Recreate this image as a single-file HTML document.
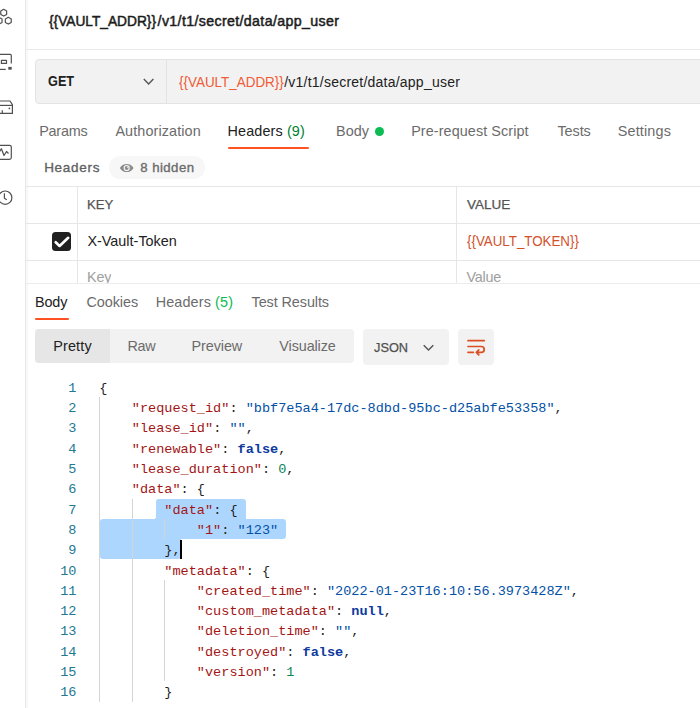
<!DOCTYPE html>
<html><head><meta charset="utf-8">
<style>
*{margin:0;padding:0;box-sizing:border-box}
html,body{width:700px;height:708px;overflow:hidden;background:#fff}
body{position:relative;font-family:"Liberation Sans",sans-serif;color:#212121}
.a{position:absolute;white-space:pre;line-height:1}
.hl{position:absolute;height:1px;background:#e6e6e6}
.vl{position:absolute;width:1px;background:#e6e6e6}
.code{font-family:"Liberation Mono",monospace;font-size:13.553px;color:#1f1f1f}
.ln{position:absolute;font-family:"Liberation Mono",monospace;font-size:13.553px;color:#237893;text-align:right;line-height:1;white-space:pre}
.k{color:#a31515}.s{color:#0451a5}.b{color:#0d3a9e;font-weight:bold}.n{color:#098658}
</style></head><body>
<div style="position:absolute;left:25px;top:0;width:1px;height:708px;background:#e8e8e8"></div>
<div style="position:absolute;left:26px;top:0;width:2px;height:708px;background:#f8f8f8"></div>
<!-- sidebar icons -->
<svg style="position:absolute;left:0;top:0" width="25" height="210" viewBox="0 0 25 210" fill="none" stroke="#505050" stroke-width="1.2" stroke-linejoin="round">
  <path d="M3.70 9.30 L0.76 11.00 L0.76 14.40 L3.70 16.10 L6.64 14.40 L6.64 11.00Z"/>
  <path d="M8.30 17.30 L5.36 19.00 L5.36 22.40 L8.30 24.10 L11.24 22.40 L11.24 19.00Z"/>
  <path d="M-0.90 17.30 L-3.84 19.00 L-3.84 22.40 L-0.90 24.10 L2.04 22.40 L2.04 19.00Z"/>
  <path d="M-2 54.4H10.3a1 1 0 0 1 1 1V63.4"/>
  <rect x="1.4" y="60.4" width="5.1" height="3"/>
  <path d="M-2 69.4H5.7"/>
  <rect x="8.3" y="66.9" width="3.4" height="2.8" fill="#505050" stroke="none"/>
  <path d="M-2 101H10l2.4 3.6V113.4H-2"/>
  <path d="M-2 105.4H12.4"/>
  <circle cx="9.4" cy="108.4" r="0.85" fill="#505050" stroke="none"/>
  <path d="M2.3 110.2V113.4"/>
  <rect x="-2" y="145.3" width="13.3" height="14.1" rx="1.8"/>
  <path d="M-1 152.5L1.4 148.7L4 155.5L6.5 151.5L8.5 153.5"/>
  <circle cx="5.2" cy="197.7" r="6.7"/>
  <path d="M4.4 193.3V198.3L6.8 199.8"/>
</svg>

<div class="hl" style="left:26px;top:49px;width:674px;background:#e9e9e9"></div>

<!-- URL bar -->
<div style="position:absolute;left:35px;top:59px;width:700px;height:45px;background:#f2f2f2;border:1px solid #e3e3e3;border-radius:4px"></div>
<div class="vl" style="left:166px;top:60px;height:43px;background:#e3e3e3"></div>
<svg style="position:absolute;left:142px;top:77px" width="13" height="9" viewBox="0 0 13 9" fill="none" stroke="#555" stroke-width="1.4"><path d="M1.8 1.9L6.6 6.9L11.4 1.9"/></svg>

<div style="position:absolute;left:227.8px;top:147.3px;width:81.6px;height:2px;background:#ff5121;border-radius:1px"></div>
<div style="position:absolute;left:374.7px;top:126.8px;width:9px;height:9px;border-radius:50%;background:#0cbb52"></div>

<div style="position:absolute;left:108.5px;top:156px;width:96px;height:23px;border-radius:12px;background:#f7f7f7"></div>
<svg style="position:absolute;left:119.2px;top:162.4px" width="16" height="12" viewBox="0 0 16 12"><path d="M0.8 6C2.8 2.8 5.2 1.9 7.7 1.9S12.6 2.8 14.6 6C12.6 9.2 10.2 10.1 7.7 10.1S2.8 9.2 0.8 6Z" fill="#8c8c8c"/><circle cx="7.7" cy="6" r="3.1" fill="#f7f7f7"/><circle cx="7.7" cy="6" r="1.9" fill="#8c8c8c"/><circle cx="8.6" cy="5.2" r="0.6" fill="#f7f7f7"/></svg>

<!-- table -->
<div class="hl" style="left:26px;top:186px;width:674px"></div>
<div class="hl" style="left:26px;top:223px;width:674px"></div>
<div class="hl" style="left:26px;top:260px;width:674px"></div>
<div class="vl" style="left:77px;top:186px;height:97px"></div>
<div class="vl" style="left:456px;top:186px;height:97px"></div>
<div style="position:absolute;left:52px;top:232.3px;width:19px;height:19px;border-radius:3.5px;background:#212121"></div>
<svg style="position:absolute;left:52px;top:232.3px" width="19" height="19" viewBox="0 0 19 19"><path d="M3.7 10.2L7.6 14L16.2 5.8" fill="none" stroke="#fff" stroke-width="2.6" stroke-linecap="round" stroke-linejoin="round"/></svg>
<div class="hl" style="left:26px;top:283px;width:674px;background:#ececec"></div>

<div style="position:absolute;left:35px;top:318px;width:34px;height:2px;background:#ff5121;border-radius:1px"></div>

<!-- segmented -->
<div style="position:absolute;left:35px;top:329px;width:319px;height:34px;background:#f2f2f2;border-radius:4px"></div>
<div style="position:absolute;left:35px;top:329px;width:75px;height:34px;background:#e6e6e6;border-radius:4px 0 0 4px"></div>
<div style="position:absolute;left:363px;top:329px;width:86px;height:36px;background:#f2f2f2;border-radius:4px"></div>
<svg style="position:absolute;left:422px;top:342.5px" width="13" height="9" viewBox="0 0 13 9" fill="none" stroke="#555" stroke-width="1.4"><path d="M1.7 2.2L6.5 7.1L11.3 2.2"/></svg>
<div style="position:absolute;left:458px;top:329px;width:36px;height:35.5px;background:#f2f2f2;border-radius:4px"></div>
<svg style="position:absolute;left:466px;top:339px" width="20" height="18" viewBox="0 0 20 18" fill="none" stroke="#dc4f22" stroke-width="1.7" stroke-linecap="round" stroke-linejoin="round"><path d="M2 1.7H18.2M2 7.5H15.3a2.9 2.9 0 0 1 0 5.8H10.4M12.8 10.8L10.3 13.3L12.8 15.8M2 13.3H7.4"/></svg>

<div class="a" id="t_title_v" style="left:48.97px;top:13.98px;font-size:14.2px;color:#1c1c1c;letter-spacing:0.000px;-webkit-text-stroke:0.5px #1c1c1c;transform:scaleX(0.9666);transform-origin:0 0">{{VAULT_ADDR}}</div>
<div class="a" id="t_title_r" style="left:157.62px;top:13.98px;font-size:14.2px;color:#1c1c1c;letter-spacing:0.359px;-webkit-text-stroke:0.5px #1c1c1c">/v1/t1/secret/data/app_user</div>
<div class="a" id="t_get" style="left:48.48px;top:74.25px;font-size:14px;color:#212121;letter-spacing:0.000px;font-weight:bold;transform:scaleX(0.9074);transform-origin:0 0">GET</div>
<div class="a" id="t_url_v" style="left:178.70px;top:74.95px;font-size:14px;color:#f05a35;letter-spacing:0.000px;transform:scaleX(0.9596);transform-origin:0 0">{{VAULT_ADDR}}</div>
<div class="a" id="t_url_r" style="left:284.25px;top:74.95px;font-size:14px;color:#212121;letter-spacing:0.227px">/v1/t1/secret/data/app_user</div>
<div class="a" id="t_params" style="left:39.20px;top:124.11px;font-size:14.4px;color:#6b6b6b;letter-spacing:-0.234px">Params</div>
<div class="a" id="t_auth" style="left:115.39px;top:124.11px;font-size:14.4px;color:#6b6b6b;letter-spacing:0.114px">Authorization</div>
<div class="a" id="t_hdr" style="left:227.62px;top:124.11px;font-size:14.4px;color:#212121;letter-spacing:0.108px">Headers <span style="color:#007f31">(9)</span></div>
<div class="a" id="t_body" style="left:336.06px;top:124.01px;font-size:14.4px;color:#6b6b6b;letter-spacing:0.069px">Body</div>
<div class="a" id="t_pre" style="left:411.20px;top:124.01px;font-size:14.4px;color:#6b6b6b;letter-spacing:0.082px">Pre-request Script</div>
<div class="a" id="t_tests" style="left:557.39px;top:124.01px;font-size:14.4px;color:#6b6b6b;letter-spacing:-0.045px">Tests</div>
<div class="a" id="t_settings" style="left:617.73px;top:124.01px;font-size:14.4px;color:#6b6b6b;letter-spacing:0.167px">Settings</div>
<div class="a" id="t_hdr2" style="left:44.16px;top:160.97px;font-size:13.5px;color:#616161;letter-spacing:0.703px;-webkit-text-stroke:0.35px #616161">Headers</div>
<div class="a" id="t_hidden" style="left:140.36px;top:161.13px;font-size:13.2px;color:#6b6b6b;letter-spacing:0.431px;-webkit-text-stroke:0.35px #6b6b6b">8 hidden</div>
<div class="a" id="t_key" style="left:86.58px;top:197.79px;font-size:13.6px;color:#545454;letter-spacing:0.000px;-webkit-text-stroke:0.25px #545454;transform:scaleX(0.9658);transform-origin:0 0">KEY</div>
<div class="a" id="t_value" style="left:466.74px;top:197.79px;font-size:13.6px;color:#545454;letter-spacing:0.000px;-webkit-text-stroke:0.25px #545454;transform:scaleX(0.9910);transform-origin:0 0">VALUE</div>
<div class="a" id="t_xvt" style="left:87.38px;top:233.81px;font-size:14.4px;color:#212121;letter-spacing:0.011px">X-Vault-Token</div>
<div class="a" id="t_vt" style="left:467.45px;top:233.81px;font-size:14.4px;color:#d4502a;letter-spacing:0.000px;transform:scaleX(0.9264);transform-origin:0 0">{{VAULT_TOKEN}}</div>
<div class="a" id="t_rbody" style="left:35.07px;top:294.81px;font-size:14.4px;color:#212121;letter-spacing:-0.176px">Body</div>
<div class="a" id="t_cookies" style="left:86.39px;top:294.81px;font-size:14.4px;color:#6b6b6b;letter-spacing:-0.038px">Cookies</div>
<div class="a" id="t_rh" style="left:155.73px;top:294.81px;font-size:14.4px;color:#6b6b6b;letter-spacing:0.124px">Headers <span style="color:#0cbb52">(5)</span></div>
<div class="a" id="t_tr" style="left:251.57px;top:294.81px;font-size:14.4px;color:#6b6b6b;letter-spacing:-0.079px">Test Results</div>
<div class="a" id="t_pretty" style="left:53.16px;top:339.01px;font-size:14.4px;color:#212121;letter-spacing:0.166px">Pretty</div>
<div class="a" id="t_raw" style="left:127.45px;top:339.01px;font-size:14.4px;color:#6b6b6b;letter-spacing:-0.313px">Raw</div>
<div class="a" id="t_preview" style="left:191.45px;top:339.01px;font-size:14.4px;color:#6b6b6b;letter-spacing:-0.059px">Preview</div>
<div class="a" id="t_vis" style="left:279.35px;top:339.01px;font-size:14.4px;color:#6b6b6b;letter-spacing:-0.110px">Visualize</div>
<div class="a" id="t_json" style="left:374.46px;top:340.89px;font-size:13.6px;color:#505050;letter-spacing:0.000px;-webkit-text-stroke:0.25px #505050;transform:scaleX(0.9408);transform-origin:0 0">JSON</div>
<div class="a" id="t_kph" style="left:87.00px;top:269.41px;font-size:14.4px;color:#9e9e9e;letter-spacing:-0.200px;height:13.59px;overflow:hidden;line-height:1.2">Key</div>
<div class="a" id="t_vph" style="left:466.40px;top:269.41px;font-size:14.4px;color:#9e9e9e;letter-spacing:-0.200px;height:13.59px;overflow:hidden;line-height:1.2">Value</div>

<div style="position:absolute;left:156.23px;top:498.50px;width:89.46px;height:20.30px;background:#add6ff;border-radius:3px 3px 0 0"></div>
<div style="position:absolute;left:100.36px;top:518.80px;width:186.00px;height:20.30px;background:#add6ff;border-radius:3px 3px 3px 0"></div>
<div style="position:absolute;left:100.36px;top:539.10px;width:80.27px;height:20.30px;background:#add6ff;border-radius:0 0 3px 3px"></div>
<div style="position:absolute;left:153.23px;top:515.80px;width:3px;height:3px;background:radial-gradient(circle at 0 0, transparent 3px, #add6ff 3px)"></div>
<div style="position:absolute;left:99.30px;top:397.00px;width:1px;height:304.50px;background:#d4d4d4"></div>
<div style="position:absolute;left:131.83px;top:498.50px;width:1px;height:203.00px;background:#d4d4d4"></div>
<div style="position:absolute;left:164.36px;top:518.80px;width:1px;height:20.30px;background:#d4d4d4"></div>
<div style="position:absolute;left:164.36px;top:579.70px;width:1px;height:101.50px;background:#d4d4d4"></div>
<div class="ln" style="top:381.81px;right:623.50px">1</div>
<div class="a code" style="left:99.30px;top:381.81px">{</div>
<div class="ln" style="top:402.11px;right:623.50px">2</div>
<div class="a code" style="left:99.30px;top:402.11px">    <span class="k">&quot;request_id&quot;</span>: <span class="s">&quot;bbf7e5a4-17dc-8dbd-95bc-d25abfe53358&quot;</span>,</div>
<div class="ln" style="top:422.41px;right:623.50px">3</div>
<div class="a code" style="left:99.30px;top:422.41px">    <span class="k">&quot;lease_id&quot;</span>: <span class="s">&quot;&quot;</span>,</div>
<div class="ln" style="top:442.71px;right:623.50px">4</div>
<div class="a code" style="left:99.30px;top:442.71px">    <span class="k">&quot;renewable&quot;</span>: <span class="b">false</span>,</div>
<div class="ln" style="top:463.01px;right:623.50px">5</div>
<div class="a code" style="left:99.30px;top:463.01px">    <span class="k">&quot;lease_duration&quot;</span>: <span class="n">0</span>,</div>
<div class="ln" style="top:483.31px;right:623.50px">6</div>
<div class="a code" style="left:99.30px;top:483.31px">    <span class="k">&quot;data&quot;</span>: {</div>
<div class="ln" style="top:503.61px;right:623.50px">7</div>
<div class="a code" style="left:99.30px;top:503.61px">        <span class="k">&quot;data&quot;</span>: {</div>
<div class="ln" style="top:523.91px;right:623.50px">8</div>
<div class="a code" style="left:99.30px;top:523.91px">            <span class="k">&quot;1&quot;</span>: <span class="s">&quot;123&quot;</span></div>
<div class="ln" style="top:544.21px;right:623.50px">9</div>
<div class="a code" style="left:99.30px;top:544.21px">        },</div>
<div class="ln" style="top:564.51px;right:623.50px">10</div>
<div class="a code" style="left:99.30px;top:564.51px">        <span class="k">&quot;metadata&quot;</span>: {</div>
<div class="ln" style="top:584.81px;right:623.50px">11</div>
<div class="a code" style="left:99.30px;top:584.81px">            <span class="k">&quot;created_time&quot;</span>: <span class="s">&quot;2022-01-23T16:10:56.3973428Z&quot;</span>,</div>
<div class="ln" style="top:605.11px;right:623.50px">12</div>
<div class="a code" style="left:99.30px;top:605.11px">            <span class="k">&quot;custom_metadata&quot;</span>: <span class="b">null</span>,</div>
<div class="ln" style="top:625.41px;right:623.50px">13</div>
<div class="a code" style="left:99.30px;top:625.41px">            <span class="k">&quot;deletion_time&quot;</span>: <span class="s">&quot;&quot;</span>,</div>
<div class="ln" style="top:645.71px;right:623.50px">14</div>
<div class="a code" style="left:99.30px;top:645.71px">            <span class="k">&quot;destroyed&quot;</span>: <span class="b">false</span>,</div>
<div class="ln" style="top:666.01px;right:623.50px">15</div>
<div class="a code" style="left:99.30px;top:666.01px">            <span class="k">&quot;version&quot;</span>: <span class="n">1</span></div>
<div class="ln" style="top:686.31px;right:623.50px">16</div>
<div class="a code" style="left:99.30px;top:686.31px">        }</div>
<div style="position:absolute;left:180.33px;top:539.60px;width:2px;height:19.30px;background:#000"></div>
</body></html>
